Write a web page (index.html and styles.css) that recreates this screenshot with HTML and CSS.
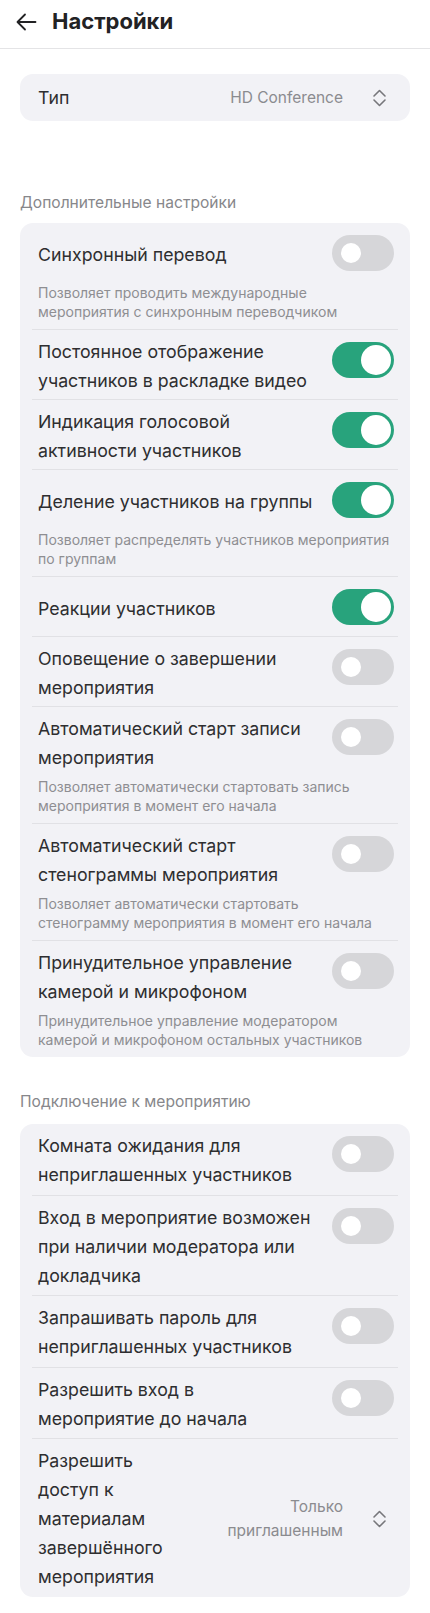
FILE: index.html
```html
<!DOCTYPE html>
<html lang="ru">
<head>
<meta charset="utf-8">
<title>Настройки</title>
<link rel="stylesheet" href="styles.css">
</head>
<body>
<header class="topbar">
  <button class="back" aria-label="Назад">
    <svg width="24" height="24" viewBox="0 0 24 24" fill="none" stroke="currentColor" stroke-width="1.8" stroke-linecap="round" stroke-linejoin="round"><path d="M21.5 12H4"/><path d="M11 4.5L3.5 12L11 19.5"/></svg>
  </button>
  <h1 class="title">Настройки</h1>
</header>

<main class="content">
  <div class="card select-card">
    <span class="select-label">Тип</span>
    <span class="select-value">HD Conference</span>
    <svg class="chev" width="15" height="20" viewBox="0 0 15 20" fill="none" stroke="currentColor" stroke-width="1.6" stroke-linecap="round" stroke-linejoin="round"><path d="M2 8L7.5 2.5L13 8"/><path d="M2 12L7.5 17.5L13 12"/></svg>
  </div>

  <h2 class="section-title first">Дополнительные настройки</h2>
  <div class="card list">
    <div class="row">
      <div class="row-head"><span class="row-label">Синхронный перевод</span><span class="switch"></span></div>
      <p class="row-desc">Позволяет проводить международные мероприятия с синхронным переводчиком</p>
    </div>
    <div class="row">
      <div class="row-head"><span class="row-label">Постоянное отображение участников в раскладке видео</span><span class="switch on"></span></div>
    </div>
    <div class="row">
      <div class="row-head"><span class="row-label">Индикация голосовой активности участников</span><span class="switch on"></span></div>
    </div>
    <div class="row">
      <div class="row-head"><span class="row-label">Деление участников на группы</span><span class="switch on"></span></div>
      <p class="row-desc">Позволяет распределять участников мероприятия по группам</p>
    </div>
    <div class="row">
      <div class="row-head"><span class="row-label">Реакции участников</span><span class="switch on"></span></div>
    </div>
    <div class="row">
      <div class="row-head"><span class="row-label">Оповещение о завершении мероприятия</span><span class="switch"></span></div>
    </div>
    <div class="row">
      <div class="row-head"><span class="row-label">Автоматический старт записи мероприятия</span><span class="switch"></span></div>
      <p class="row-desc">Позволяет автоматически стартовать запись мероприятия в момент его начала</p>
    </div>
    <div class="row">
      <div class="row-head"><span class="row-label">Автоматический старт стенограммы мероприятия</span><span class="switch"></span></div>
      <p class="row-desc">Позволяет автоматически стартовать<br>стенограмму мероприятия в момент его начала</p>
    </div>
    <div class="row">
      <div class="row-head"><span class="row-label">Принудительное управление камерой и микрофоном</span><span class="switch"></span></div>
      <p class="row-desc">Принудительное управление модератором камерой и микрофоном остальных участников</p>
    </div>
  </div>

  <h2 class="section-title second">Подключение к мероприятию</h2>
  <div class="card list join">
    <div class="row">
      <div class="row-head"><span class="row-label">Комната ожидания для неприглашенных участников</span><span class="switch"></span></div>
    </div>
    <div class="row">
      <div class="row-head"><span class="row-label">Вход в мероприятие возможен при наличии модератора или докладчика</span><span class="switch"></span></div>
    </div>
    <div class="row">
      <div class="row-head"><span class="row-label">Запрашивать пароль для неприглашенных участников</span><span class="switch"></span></div>
    </div>
    <div class="row">
      <div class="row-head"><span class="row-label">Разрешить вход в<br>мероприятие до начала</span><span class="switch"></span></div>
    </div>
    <div class="row">
      <div class="row-head">
        <span class="row-label narrow">Разрешить доступ к материалам завершённого мероприятия</span>
        <span class="row-value">Только приглашенным</span>
        <svg class="chev" width="15" height="20" viewBox="0 0 15 20" fill="none" stroke="currentColor" stroke-width="1.6" stroke-linecap="round" stroke-linejoin="round"><path d="M2 8L7.5 2.5L13 8"/><path d="M2 12L7.5 17.5L13 12"/></svg>
      </div>
    </div>
  </div>
</main>
</body>
</html>
```

FILE: styles.css
```css
* { box-sizing: border-box; }

body {
  margin: 0;
  background: #ffffff;
  font-family: Inter, "Noto Sans", sans-serif;
  color: #2e2e30;
}

.topbar {
  height: 49px;
  border-bottom: 1px solid #e4e4e6;
  display: flex;
  align-items: flex-start;
  padding: 0 0 0 14px;
}

.back {
  margin: 10px 14px 0 0;
  padding: 0;
  border: 0;
  background: none;
  color: #222224;
  width: 24px;
  height: 24px;
  display: flex;
}

.title {
  margin: 7px 0 0;
  font-size: 22px;
  line-height: 28px;
  font-weight: 700;
  color: #222224;
}

.content {
  padding: 25px 20px 17px;
}

.card {
  background: #f2f2f6;
  border-radius: 13px;
}

.select-card {
  height: 47px;
  display: flex;
  align-items: center;
  padding: 0 23px 0 18px;
}

.select-label {
  flex: 1;
  font-size: 17.75px;
}

.select-value {
  font-size: 15.5px;
  color: #8b8b8f;
  margin-right: 29px;
}

.chev {
  color: #77777b;
  flex-shrink: 0;
}

.section-title {
  margin: 0 0 10px;
  font-size: 15.6px;
  line-height: 20px;
  font-weight: 400;
  color: #87878b;
}

.section-title.first { margin-top: 72px; }
.section-title.second { margin-top: 35px; margin-bottom: 12px; }

.list {
  padding: 0 12px;
}

.row {
  padding: 7px 4px 4px 6px;
  border-bottom: 1px solid #e1e1e5;
}

.join .row { padding-bottom: 5.5px; }

.row:last-child { border-bottom: 0; }

.row-head {
  display: flex;
  align-items: center;
  min-height: 48px;
  gap: 14px;
}

.row-label {
  flex: 1;
  font-size: 17.75px;
  line-height: 29px;
}

.row-label.narrow {
  flex: 0 0 140px;
}

.row-value {
  margin-left: auto;
  max-width: 130px;
  text-align: right;
  font-size: 15.5px;
  line-height: 24px;
  color: #8b8b8f;
}

.row-head .chev {
  margin: 0 7px 0 15px;
}

.row-desc {
  margin: 6px 0 4px;
  font-size: 14px;
  line-height: 18.5px;
  color: #8e8e92;
}

.switch {
  align-self: flex-start;
  margin-top: 5px;
  width: 62px;
  height: 36px;
  border-radius: 18px;
  background: #d6d6d9;
  position: relative;
  flex-shrink: 0;
}

.switch::after {
  content: "";
  position: absolute;
  left: 9px;
  top: 8px;
  width: 20px;
  height: 20px;
  border-radius: 50%;
  background: #ffffff;
}

.switch.on { background: #28a37c; }

.switch.on::after {
  left: 29px;
  top: 3px;
  width: 30px;
  height: 30px;
}
```
